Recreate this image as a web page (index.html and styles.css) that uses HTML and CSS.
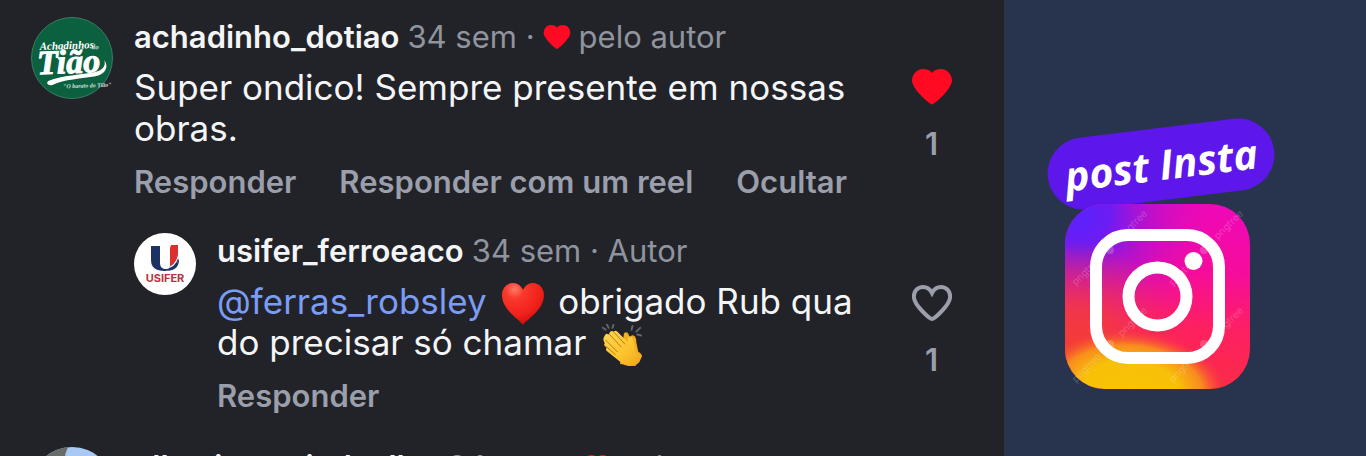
FILE: index.html
```html
<!DOCTYPE html>
<html lang="pt-BR">
<head>
<meta charset="UTF-8">
<meta name="viewport" content="width=device-width, initial-scale=1.0">
<title>Post Insta</title>
<link rel="stylesheet" href="styles.css">
</head>
<body>

<div class="banner">

 <main class="comments">

  <article class="comment">
   <svg class="avatar" viewBox="0 0 82 82" role="img" aria-label="Achadinhos do Tião">
    <circle cx="41" cy="41" r="40.5" fill="#0b6040" stroke="#3c7b62"/>
    <g fill="#fff" transform="rotate(-2 41 41)">
     <text class="logo-script" x="9" y="32" font-size="11">Achadinhos</text>
     <text class="logo-script" x="61" y="33" font-size="7" opacity=".8">do</text>
     <text class="logo-script logo-big" x="6" y="56" font-size="34">Tião</text>
     <path d="M17 63c13-5 34-5 46-7 9-2 12-7 10-12 5 7 1 14-9 16-14 2-32 2-43 7-4 2-8-2-4-4z"/>
     <text class="logo-script" x="31" y="71" font-size="6" opacity=".8">"O barato do Tião"</text>
    </g>
   </svg>
   <div class="content">
    <header class="meta">
     <a class="user" href="#">achadinho_dotiao</a>
     <span class="time">34 sem ·</span>
     <svg class="mini-heart" viewBox="0 0 40 36"><path d="M20 36C18 36 1 21 0 12 0 5 5 0 11 0c4 0 7 1 9 4 2-3 5-4 9-4 6 0 11 5 11 12-1 9-18 24-20 24z"/></svg>
     <span class="by">pelo autor</span>
    </header>
    <p class="text">Super ondico! Sempre presente em nossas<br>obras.</p>
    <div class="actions">
     <button>Responder</button>
     <button>Responder com um reel</button>
     <button>Ocultar</button>
    </div>
   </div>
   <div class="likes">
    <button class="like liked" aria-label="Descurtir">
     <svg viewBox="0 0 40 36"><path d="M20 35.500C18 35.500 1 21 0 12 0 5 5 0 11 0c4 0 7 1 9 4 2-3 5-4 9-4 6 0 11 5 11 12-1 9-18 23.500-20 23.500z"/></svg>
    </button>
    <span class="count">1</span>
   </div>
  </article>

  <article class="comment reply">
   <svg class="avatar" viewBox="0 0 62 62" role="img" aria-label="Usifer">
    <circle cx="31" cy="31" r="31" fill="#fff"/>
    <path d="M17 13h9v17q0 6 6 6 3 0 4-3l8-7v1q0 10-13 11-14 0-14-11z" fill="#1c3264"/>
    <path d="M36 15l1-3h7v12q-1 6-8 9z" fill="#dc3030"/>
    <path d="M44 22q-2 11-14 14 12-1 14-11z" fill="#fff"/>
    <path d="M45 25q-2 10-12 13 12-1 12-11z" fill="#1c3264"/>
    <text class="logo-sans" x="31" y="49" text-anchor="middle" font-size="11" fill="#b8323c">USIFER</text>
   </svg>
   <div class="content">
    <header class="meta">
     <a class="user" href="#">usifer_ferroeaco</a>
     <span class="time">34 sem · Autor</span>
    </header>
    <p class="text">
     <a class="mention" href="#">@ferras_robsley</a>
     <svg class="emoji" viewBox="0 0 42 42" role="img" aria-label="coração">
      <defs>
       <radialGradient id="heart" cx=".3" cy=".15" r=".9">
        <stop offset="0" stop-color="#ff7a66"/>
        <stop offset=".25" stop-color="#fb382c"/>
        <stop offset=".7" stop-color="#f0201a"/>
        <stop offset="1" stop-color="#c80a10"/>
       </radialGradient>
      </defs>
      <path d="M21 42C17 36 0 27 0 12 0 5 5 0 11 0c5 0 8 3 10 7 2-4 5-7 10-7 6 0 11 5 11 12 0 15-17 24-21 30z" fill="url(#heart)"/>
     </svg>
     obrigado Rub qua<br>do precisar só chamar
     <svg class="emoji" viewBox="0 0 42 44" role="img" aria-label="palmas">
      <defs>
       <linearGradient id="skin" x1="0" y1="0" x2="1" y2="1">
        <stop offset="0" stop-color="#ffd652"/>
        <stop offset=".6" stop-color="#fcc32e"/>
        <stop offset="1" stop-color="#eea21c"/>
       </linearGradient>
      </defs>
      <g stroke="#62676d" stroke-width="2" stroke-linecap="round">
       <path d="M1 4l3 2M5 0l2 4M12 1l-1 3M32 2l-1 4M40 4l-4 4M41 12l-4-1"/>
      </g>
      <path d="M23 10q3-3 5 1l1 4q1-4 4-3 3 1 3 7l2 10q4 2 4 5l-7 10-16-2z" fill="#f2ae22"/>
      <path d="M3 12q1-3 4-1Q9 6 12 8q3-2 5 1l10 10q0-7 3-6 3 1 4 9l1 7 6 5q0 6-6 9-7 3-14-2L6 29q-3-2-1-4-4-3-2-5-3-4 0-8z" fill="url(#skin)"/>
      <path d="M8 11l12 13M13 9l11 12M4 17l12 12M5 24l9 8" fill="none" stroke="#b87812" stroke-width="1" stroke-linecap="round"/>
     </svg>
    </p>
    <div class="actions">
     <button>Responder</button>
    </div>
   </div>
   <div class="likes">
    <button class="like" aria-label="Curtir">
     <svg viewBox="0 0 40 36"><path d="M20 34C18 34 3 21 2 13 1 6 6 2 11 2c4 0 7 2 9 6 2-4 5-6 9-6 5 0 10 4 9 11-1 8-16 21-18 21z"/></svg>
    </button>
    <span class="count">1</span>
   </div>
  </article>

  <article class="comment">
   <svg class="avatar" viewBox="0 0 82 82" role="img" aria-label="Foto do perfil">
    <circle cx="41" cy="41" r="41" fill="#aac8f4"/>
    <path d="M0 41A41 41 0 0 1 37 0l-3 8 6 10-6 30z" fill="#686c68"/>
   </svg>
   <div class="content">
    <header class="meta">
     <a class="user" href="#">ellamicserairelaollas</a>
     <span class="time">34 sem ·</span>
     <svg class="mini-heart" viewBox="0 0 40 36"><path d="M20 36C18 36 1 21 0 12 0 5 5 0 11 0c4 0 7 1 9 4 2-3 5-4 9-4 6 0 11 5 11 12-1 9-18 24-20 24z"/></svg>
     <span class="by">pelo autor</span>
    </header>
   </div>
  </article>

 </main>

 <aside class="promo">
  <div class="pill">post Insta</div>
  <svg class="insta" viewBox="0 0 185 185" role="img" aria-label="Instagram">
   <defs>
    <linearGradient id="base" x1=".7" y1="0" x2=".6" y2="1">
     <stop offset="0" stop-color="#ee08b8"/>
     <stop offset=".35" stop-color="#f60c9c"/>
     <stop offset=".65" stop-color="#fd2062"/>
     <stop offset="1" stop-color="#fb2c44"/>
    </linearGradient>
    <radialGradient id="violet" cx=".08" cy=".06" r=".75">
     <stop offset="0" stop-color="#5a22ff"/>
     <stop offset=".22" stop-color="#6d1cf2"/>
     <stop offset=".45" stop-color="#a014d8" stop-opacity=".8"/>
     <stop offset="1" stop-color="#ee08b8" stop-opacity="0"/>
    </radialGradient>
    <radialGradient id="orange" cx=".05" cy=".8" r=".6">
     <stop offset="0" stop-color="#f43c34"/>
     <stop offset=".4" stop-color="#f43c3c" stop-opacity=".8"/>
     <stop offset="1" stop-color="#f8304c" stop-opacity="0"/>
    </radialGradient>
    <radialGradient id="yellow" cx="0" cy="0" r="1" gradientUnits="userSpaceOnUse" gradientTransform="translate(66 185) rotate(5) scale(96 58)">
     <stop offset="0" stop-color="#f8c404"/>
     <stop offset=".5" stop-color="#f8c008"/>
     <stop offset=".75" stop-color="#f89c18" stop-opacity=".85"/>
     <stop offset="1" stop-color="#f84834" stop-opacity="0"/>
    </radialGradient>
   </defs>
   <rect width="185" height="185" rx="40" fill="url(#base)"/>
   <rect width="185" height="185" rx="40" fill="url(#violet)"/>
   <rect width="185" height="185" rx="40" fill="url(#orange)"/>
   <rect width="185" height="185" rx="40" fill="url(#yellow)"/>
   <g class="watermark">
    <text transform="translate(57 36) rotate(-45)">pngtree</text>
    <text transform="translate(153 36) rotate(-45)">pngtree</text>
    <text transform="translate(11 82) rotate(-45)">pngtree</text>
    <text transform="translate(108 82) rotate(-45)">pngtree</text>
    <text transform="translate(57 133) rotate(-45)">pngtree</text>
    <text transform="translate(153 133) rotate(-45)">pngtree</text>
    <text transform="translate(11 179) rotate(-45)">pngtree</text>
    <text transform="translate(108 179) rotate(-45)">pngtree</text>
    <circle cx="45" cy="46" r="4"/>
    <circle cx="139" cy="46" r="4"/>
    <circle cx="45" cy="140" r="4"/>
    <circle cx="139" cy="140" r="4"/>
   </g>
   <g fill="none" stroke="#fff" stroke-width="12">
    <rect x="31" y="31" width="123" height="123" rx="32"/>
    <circle cx="92.500" cy="92.500" r="29"/>
   </g>
   <circle cx="128.500" cy="57" r="9" fill="#fff"/>
  </svg>
 </aside>

</div>

</body>
</html>
```
FILE: styles.css
```css
* {
 box-sizing: border-box;
}
body {
 margin: 0;
 font-family: Inter, "Liberation Sans", sans-serif;
 background-color: #28344e;
}
a {
 color: inherit;
 text-decoration: none;
}
button {
 padding: 0;
 border: none;
 background: none;
 color: inherit;
 font: inherit;
 cursor: pointer;
}
.banner {
 display: grid;
 grid-template-columns: 1fr 362px;
 height: 100vh;
 overflow: hidden;
}

/* comentarios */
.comments {
 display: flex;
 flex-direction: column;
 gap: 33px;
 padding: 17px 36px 0 31px;
 overflow: hidden;
 background-color: #222328;
 color: #f4f5f7;
}
.comment {
 display: flex;
 align-items: flex-start;
}
.comment.reply {
 padding-left: 103px;
}
.avatar {
 flex: none;
 width: 82px;
 height: 82px;
 margin-right: 21px;
}
.reply .avatar {
 width: 62px;
 height: 62px;
}
.content {
 flex: 1;
 min-width: 0;
 padding-top: 2px;
}
.reply .content {
 padding-top: 0;
}
.meta {
 display: flex;
 align-items: center;
 gap: 8px;
 font-size: 31px;
 line-height: 36px;
 white-space: nowrap;
}
.user {
 font-weight: 600;
}
.time,
.by {
 color: #8f949e;
}
.mini-heart {
 width: 28px;
 height: 24px;
 fill: #ff0a22;
}
.text {
 margin: 12px 0 15px;
 font-size: 35px;
 line-height: 41px;
 white-space: nowrap;
}
.mention {
 color: #7b9cf5;
}
.emoji {
 width: 42px;
 height: 42px;
 margin: -8px 5px;
 vertical-align: middle;
}
.actions {
 display: flex;
 gap: 43px;
 font-size: 31px;
 font-weight: 600;
 line-height: 36px;
 white-space: nowrap;
 color: #9a9fab;
}
.likes {
 display: flex;
 flex-direction: column;
 align-items: center;
 gap: 21px;
 width: 73px;
 padding-top: 52px;
}
.like svg {
 display: block;
 width: 40px;
 height: 36px;
 fill: none;
 stroke: #9a9fab;
 stroke-width: 4px;
}
.like.liked svg {
 fill: #ff0a22;
 stroke: none;
}
.count {
 font-size: 31px;
 font-weight: 600;
 line-height: 36px;
 color: #9a9fab;
}
.logo-script {
 font-family: "Liberation Serif", serif;
 font-style: italic;
 font-weight: bold;
}
.logo-big {
 stroke: #fff;
 stroke-width: 1px;
}
.logo-sans {
 font-family: Inter, sans-serif;
 font-weight: 700;
}

/* chamada para o instagram */
.promo {
 padding: 128px 0 0 43px;
}
.pill {
 width: 228px;
 height: 72px;
 border-radius: 36px;
 background-color: #5d17eb;
 color: #fff;
 font: italic bold 41px/72px "Open Sans", sans-serif;
 text-align: center;
 white-space: nowrap;
 transform: rotate(-7deg);
}
.insta {
 display: block;
 position: relative;
 width: 185px;
 height: 185px;
 margin: 4px 0 0 18px;
}
.watermark {
 fill: #fff;
 fill-opacity: .2;
 font-family: Inter, sans-serif;
 font-size: 10px;
}
```
